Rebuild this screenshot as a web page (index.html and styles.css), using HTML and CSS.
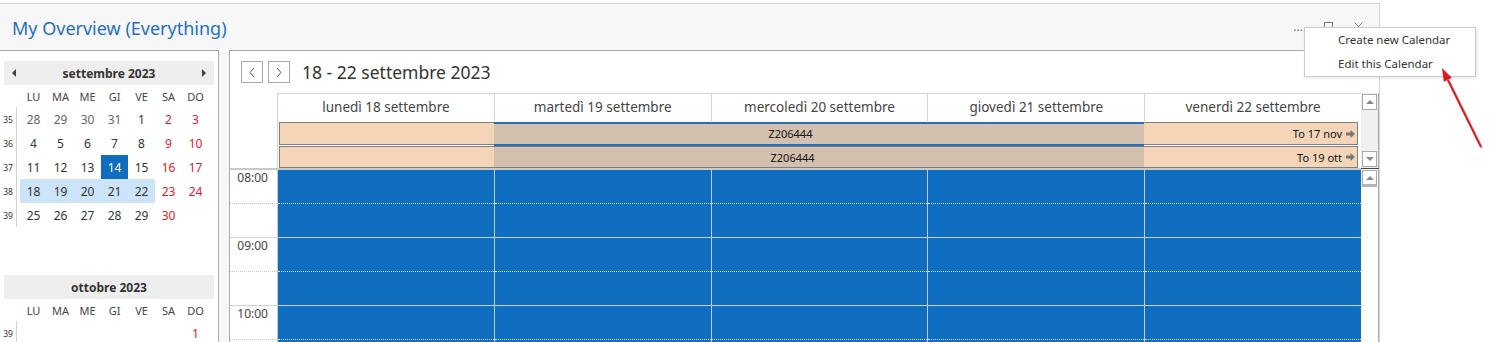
FILE: index.html
```html
<!DOCTYPE html>
<html lang="it">
  <head>
    <meta charset="utf-8">
    <title>My Overview (Everything)</title>
    <link rel="stylesheet" href="styles.css">
  </head>
  <body>
    <div class="window">
      <div class="titlebar">
        <div class="title">My Overview (Everything)</div>
        <div class="winctl">
          <span class="dots">...</span>
          <svg class="ctl" width="9" height="9" viewBox="0 0 9 9"><rect x="0.5" y="0.5" width="8" height="8" fill="none" stroke="#777"/></svg>
          <svg class="ctl" width="9" height="9" viewBox="0 0 9 9"><path d="M0.5 0.5L8.5 8.5M8.5 0.5L0.5 8.5" stroke="#777" stroke-width="1"/></svg>
        </div>
      </div>

      <div class="panes">
        <!-- mini calendars -->
        <div class="side">
          <div class="month sept">
            <div class="mhead"><span class="tri left"></span><span>settembre 2023</span><span class="tri right"></span></div>
            <div class="mrow names"><span class="wk"></span><span class="d">LU</span><span class="d">MA</span><span class="d">ME</span><span class="d">GI</span><span class="d">VE</span><span class="d">SA</span><span class="d">DO</span></div>
            <div class="mrow"><span class="wk">35</span><span class="d other">28</span><span class="d other">29</span><span class="d other">30</span><span class="d other">31</span><span class="d">1</span><span class="d we">2</span><span class="d we">3</span></div>
            <div class="mrow"><span class="wk">36</span><span class="d">4</span><span class="d">5</span><span class="d">6</span><span class="d">7</span><span class="d">8</span><span class="d we">9</span><span class="d we">10</span></div>
            <div class="mrow"><span class="wk">37</span><span class="d">11</span><span class="d">12</span><span class="d">13</span><span class="d today">14</span><span class="d">15</span><span class="d we">16</span><span class="d we">17</span></div>
            <div class="mrow"><span class="wk">38</span><span class="d sel">18</span><span class="d sel">19</span><span class="d sel">20</span><span class="d sel">21</span><span class="d sel">22</span><span class="d we">23</span><span class="d we">24</span></div>
            <div class="mrow"><span class="wk">39</span><span class="d">25</span><span class="d">26</span><span class="d">27</span><span class="d">28</span><span class="d">29</span><span class="d we">30</span><span class="d"></span></div>
          </div>
          <div class="month">
            <div class="mhead center"><span>ottobre 2023</span></div>
            <div class="mrow names"><span class="wk"></span><span class="d">LU</span><span class="d">MA</span><span class="d">ME</span><span class="d">GI</span><span class="d">VE</span><span class="d">SA</span><span class="d">DO</span></div>
            <div class="mrow"><span class="wk">39</span><span class="d"></span><span class="d"></span><span class="d"></span><span class="d"></span><span class="d"></span><span class="d"></span><span class="d we">1</span></div>
          </div>
        </div>

        <!-- week view -->
        <div class="main">
          <div class="nav">
            <span class="navbtn"><svg width="8" height="11" viewBox="0 0 8 11"><polyline points="6,1 2,5.5 6,10" fill="none" stroke="#555"/></svg></span>
            <span class="navbtn"><svg width="8" height="11" viewBox="0 0 8 11"><polyline points="2,1 6,5.5 2,10" fill="none" stroke="#555"/></svg></span>
            <span class="range">18 - 22 settembre 2023</span>
          </div>

          <div class="sched">
            <div class="dh c2">lunedì 18 settembre</div>
            <div class="dh c3">martedì 19 settembre</div>
            <div class="dh c4">mercoledì 20 settembre</div>
            <div class="dh c5">giovedì 21 settembre</div>
            <div class="dh c6">venerdì 22 settembre</div>
            <div class="vs1">
              <span class="sbtn"><span class="up"></span></span>
              <span class="sbtn"><span class="down"></span></span>
            </div>

            <div class="abg"></div>
            <div class="bar bar1"><span class="evt">Z206444</span><span class="until">To 17 nov <svg width="9" height="8" viewBox="0 0 9 8"><path d="M0 2.5h4.5V0L9 4 4.5 8V5.5H0z" fill="#777"/></svg></span></div>
            <div class="bar bar2"><span class="evt">Z206444</span><span class="until">To 19 ott <svg width="9" height="8" viewBox="0 0 9 8"><path d="M0 2.5h4.5V0L9 4 4.5 8V5.5H0z" fill="#777"/></svg></span></div>
            <div class="selline"></div>

            <div class="times">
              <div class="tslot"><span>08:00</span></div><div class="tslot hr"></div>
              <div class="tslot"><span>09:00</span></div><div class="tslot hr"></div>
              <div class="tslot"><span>10:00</span></div><div class="tslot hr"></div>
            </div>
            <div class="day c2"><div class="slot"></div><div class="slot hr"></div><div class="slot"></div><div class="slot hr"></div><div class="slot"></div><div class="slot hr"></div></div>
            <div class="day c3"><div class="slot"></div><div class="slot hr"></div><div class="slot"></div><div class="slot hr"></div><div class="slot"></div><div class="slot hr"></div></div>
            <div class="day c4"><div class="slot"></div><div class="slot hr"></div><div class="slot"></div><div class="slot hr"></div><div class="slot"></div><div class="slot hr"></div></div>
            <div class="day c5"><div class="slot"></div><div class="slot hr"></div><div class="slot"></div><div class="slot hr"></div><div class="slot"></div><div class="slot hr"></div></div>
            <div class="day c6"><div class="slot"></div><div class="slot hr"></div><div class="slot"></div><div class="slot hr"></div><div class="slot"></div><div class="slot hr"></div></div>
            <div class="vs2">
              <span class="sbtn big"><span class="up"></span></span>
            </div>
          </div>
        </div>
      </div>
    </div>

    <div class="ctxmenu">
      <div class="item">Create new Calendar</div>
      <div class="item">Edit this Calendar</div>
    </div>

    <svg class="redarrow" width="60" height="95" viewBox="0 0 60 95">
      <line x1="19" y1="21" x2="52" y2="88" stroke="#bbb" stroke-width="2"/>
      <line x1="17.8" y1="19.7" x2="51" y2="87" stroke="#e5161d" stroke-width="2"/>
      <polygon points="12,8 21.8,17.7 13.8,21.7" fill="#e5161d"/>
    </svg>
  </body>
</html>
```

FILE: styles.css
```css
body {
  margin: 0;
  background-color: #ffffff;
  color: #333333;
  font-family: "Noto Sans", "Liberation Sans", sans-serif;
  overflow: hidden;
}
.window {
  margin-top: 3px;
  width: 1380px;
  height: 339px;
  box-sizing: border-box;
  border-top: 1px solid #d6d6d6;
  border-right: 1px solid #d6d6d6;
  background-color: #f7f7f7;
  display: flex;
  flex-direction: column;
  overflow: hidden;
}
.titlebar {
  height: 46px;
  flex: none;
  display: flex;
  align-items: center;
  justify-content: space-between;
  padding-left: 12px;
}
.title {
  font-size: 18px;
  color: #1f6fc5;
  margin-top: 1px;
}
.winctl {
  display: flex;
  align-items: center;
  gap: 21px;
  padding-right: 16px;
  margin-top: -2px;
}
.dots {
  color: #777777;
  font-size: 12px;
  line-height: 10px;
  margin-top: 2px;
}
.ctl {
  display: block;
}
.panes {
  flex: 1;
  display: flex;
  gap: 10px;
  min-height: 0;
}

/* mini calendars */
.side {
  width: 218px;
  flex: none;
  background-color: #ffffff;
  border-top: 1px solid #ababab;
  border-right: 1px solid #ababab;
  padding-top: 10px;
}
.month.sept {
  margin-bottom: 48px;
}
.mhead {
  margin: 0 4px;
  height: 24px;
  padding: 0 8px;
  background-color: #eeeeee;
  display: flex;
  align-items: center;
  justify-content: space-between;
  font-size: 12px;
  font-weight: bold;
  color: #333333;
}
.mhead.center {
  justify-content: center;
}
.tri {
  width: 0;
  height: 0;
  border-top: 4px solid transparent;
  border-bottom: 4px solid transparent;
}
.tri.left {
  border-right: 4px solid #444444;
}
.tri.right {
  border-left: 4px solid #444444;
}
.mrow {
  display: flex;
  height: 24px;
}
.mrow.names {
  height: 22px;
}
.wk {
  width: 16px;
  margin-right: 3px;
  border-right: 1px solid #d2d2d2;
  font-size: 8.5px;
  color: #333333;
  display: flex;
  align-items: center;
  justify-content: center;
}
.names .wk {
  border-right-color: transparent;
}
.d {
  width: 27px;
  display: flex;
  align-items: center;
  justify-content: center;
  font-size: 12px;
  color: #333333;
}
.names .d {
  font-size: 11px;
  color: #444444;
}
.d.other {
  color: #666666;
}
.d.we {
  color: #e3202b;
}
.d.sel {
  background-color: #cce4f7;
}
.d.today {
  background-color: #0f6ebf;
  color: #ffffff;
}

/* week view */
.main {
  flex: 1;
  min-width: 0;
  background-color: #ffffff;
  border-top: 1px solid #ababab;
  border-left: 1px solid #ababab;
  display: flex;
  flex-direction: column;
}
.nav {
  height: 42px;
  flex: none;
  display: flex;
  align-items: center;
  padding-left: 11px;
}
.navbtn {
  width: 20px;
  height: 20px;
  border: 1px solid #a9a9a9;
  margin-right: 5px;
  display: flex;
  align-items: center;
  justify-content: center;
}
.range {
  margin-left: 7px;
  font-size: 17.5px;
  color: #333333;
}
.sched {
  flex: 1;
  min-height: 0;
  display: grid;
  grid-template-columns: 47px repeat(5, 1fr) 18px;
  grid-template-rows: 28px 24px 23px 1fr;
}
.c2 { grid-column: 2; }
.c3 { grid-column: 3; }
.c4 { grid-column: 4; }
.c5 { grid-column: 5; }
.c6 { grid-column: 6; }
.dh {
  grid-row: 1;
  border-top: 1px solid #d4d4d4;
  border-left: 1px solid #d4d4d4;
  text-align: center;
  font-size: 13.5px;
  line-height: 27px;
  color: #444444;
}
.vs1 {
  grid-column: 7;
  grid-row: 1 / 4;
  background-color: #f0f0f0;
  border-right: 1px solid #a9a9a9;
  padding: 1px 1px 1px 1px;
  display: flex;
  flex-direction: column;
  justify-content: space-between;
}
.sbtn {
  width: 13px;
  height: 14px;
  border: 1px solid #a9a9a9;
  background-color: #ffffff;
  display: flex;
  align-items: center;
  justify-content: center;
}
.up {
  width: 0;
  height: 0;
  border-left: 4px solid transparent;
  border-right: 4px solid transparent;
  border-bottom: 4px solid #8a8a8a;
}
.down {
  width: 0;
  height: 0;
  border-left: 4px solid transparent;
  border-right: 4px solid transparent;
  border-top: 4px solid #8a8a8a;
}
.abg {
  grid-column: 2 / 7;
  grid-row: 2 / 4;
  border-left: 1px solid #d4d4d4;
}
.bar {
  grid-column: 2 / 7;
  align-self: start;
  box-sizing: border-box;
  margin: 1px 3px 0 2px;
  border: 1px solid #7f7f7f;
  display: flex;
  align-items: center;
  font-size: 11px;
  color: #111111;
  background: linear-gradient(to right, #f4d5b8 214px, #d4c0ae 214px, #d4c0ae 864px, #f4d5b8 864px);
}
.bar1 {
  grid-row: 2;
  height: 23px;
}
.bar2 {
  grid-row: 3;
  height: 22px;
}
.evt {
  flex: 1;
  text-align: center;
  padding-left: 8px;
}
.until {
  display: flex;
  align-items: center;
  gap: 4px;
  padding-right: 2px;
}
.selline {
  grid-column: 3 / 6;
  grid-row: 2;
  align-self: start;
  box-sizing: border-box;
  height: 24px;
  margin-top: 1px;
  border-top: 2px solid #2b6cb3;
  border-bottom: 2px solid #2b6cb3;
}
.times {
  grid-column: 1;
  grid-row: 4;
  border-top: 2px solid #c8c8c8;
  overflow: hidden;
}
.tslot {
  height: 33px;
  border-bottom: 1px dotted #c4c4c4;
  text-align: right;
  padding-right: 9px;
  font-size: 12px;
  line-height: 16px;
  color: #444444;
}
.tslot.hr {
  border-bottom: 1px solid #d2d2d2;
}
.day {
  grid-row: 4;
  border-top: 2px solid #c8c8c8;
  border-left: 1px solid #c9c9c9;
  background-color: #0f6ebf;
  overflow: hidden;
}
.slot {
  height: 33px;
  border-bottom: 1px dotted #dce9f6;
}
.slot.hr {
  border-bottom: 1px solid #c6d5e6;
}
.vs2 {
  grid-column: 7;
  grid-row: 4;
  border-top: 1px solid #444444;
  border-right: 1px solid #a9a9a9;
  background-color: #ffffff;
  padding: 1px 1px 0 1px;
}
.sbtn.big {
  height: 13px;
  border-bottom: 3px solid #b5b5b5;
}

/* overlays */
.ctxmenu {
  position: absolute;
  left: 1304px;
  top: 27px;
  width: 170px;
  border: 1px solid #cccccc;
  background-color: #ffffff;
  box-shadow: 1px 1px 3px rgba(0, 0, 0, 0.12);
  padding: 0;
}
.ctxmenu .item {
  height: 24px;
  line-height: 24px;
  padding-left: 33px;
  font-size: 11.5px;
  color: #333333;
}
.redarrow {
  position: absolute;
  left: 1430px;
  top: 60px;
}
```
